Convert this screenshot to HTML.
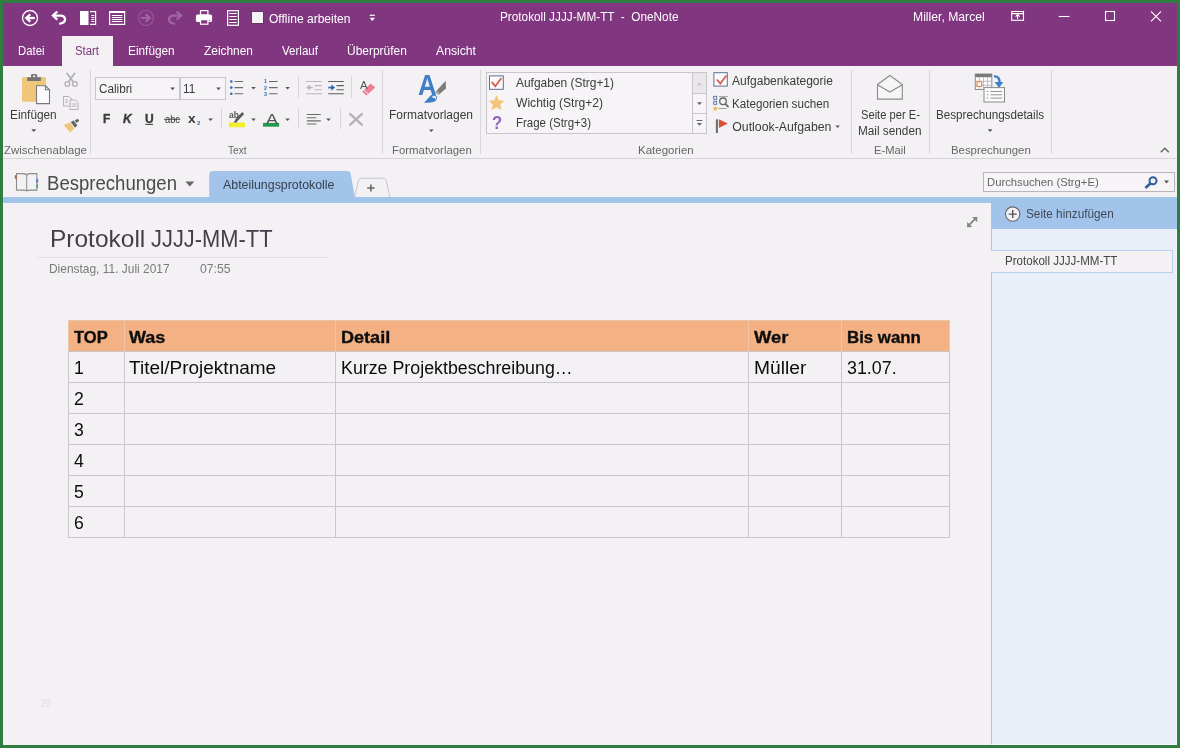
<!DOCTYPE html>
<html lang="de"><head><meta charset="utf-8"><title>Protokoll JJJJ-MM-TT - OneNote</title>
<style>
html,body{margin:0;padding:0}
body{width:1180px;height:748px;position:relative;overflow:hidden;background:#2f7d40;font-family:"Liberation Sans", sans-serif}
.r{position:absolute;box-sizing:border-box}
.t{position:absolute;white-space:pre;line-height:1;transform-origin:0 0;display:block}
svg.ov{position:absolute;left:0;top:0}
</style></head>
<body>
<div class="r" style="left:3px;top:3px;width:1174px;height:742px;background:#f3f1f4;"></div>
<div class="r" style="left:3px;top:3px;width:1174px;height:63px;background:#813680;"></div>
<div class="r" style="left:62px;top:36px;width:51px;height:30px;background:#f3f1f4;"></div>
<div class="r" style="left:3px;top:158px;width:1174px;height:1px;background:#d6d3d7;"></div>
<div class="r" style="left:90px;top:70px;width:1px;height:84px;background:#d9d6da;"></div>
<div class="r" style="left:382px;top:70px;width:1px;height:84px;background:#d9d6da;"></div>
<div class="r" style="left:480px;top:70px;width:1px;height:84px;background:#d9d6da;"></div>
<div class="r" style="left:851px;top:70px;width:1px;height:84px;background:#d9d6da;"></div>
<div class="r" style="left:929px;top:70px;width:1px;height:84px;background:#d9d6da;"></div>
<div class="r" style="left:1051px;top:70px;width:1px;height:84px;background:#d9d6da;"></div>
<div class="r" style="left:298px;top:76px;width:1px;height:22px;background:#d9d6da;"></div>
<div class="r" style="left:351px;top:76px;width:1px;height:22px;background:#d9d6da;"></div>
<div class="r" style="left:221px;top:108px;width:1px;height:21px;background:#d9d6da;"></div>
<div class="r" style="left:298px;top:108px;width:1px;height:21px;background:#d9d6da;"></div>
<div class="r" style="left:340px;top:108px;width:1px;height:21px;background:#d9d6da;"></div>
<div class="r" style="left:95px;top:77px;width:85px;height:22.5px;background:#f6f4f7;border:1px solid #c9c6cb;"></div>
<div class="r" style="left:180px;top:77px;width:45.5px;height:22.5px;background:#f6f4f7;border:1px solid #c9c6cb;"></div>
<div class="r" style="left:486px;top:72px;width:220.5px;height:61.5px;background:#f6f4f7;border:1px solid #c9c6cb;"></div>
<div class="r" style="left:692px;top:72px;width:14.5px;height:61.5px;border:1px solid #c9c6cb;"></div>
<div class="r" style="left:692px;top:93px;width:14.5px;height:1px;background:#c9c6cb;"></div>
<div class="r" style="left:692px;top:112.5px;width:14.5px;height:1px;background:#c9c6cb;"></div>
<div class="r" style="left:693px;top:73px;width:12.5px;height:20px;background:#e9e7ea;"></div>
<div class="r" style="left:983px;top:172px;width:192px;height:19.5px;background:#f6f4f7;border:1px solid #b9b6bb;"></div>
<div class="r" style="left:3px;top:197px;width:1174px;height:5.5px;background:#a2c3ea;"></div>
<div class="r" style="left:991px;top:197px;width:186px;height:32px;background:#a2c3ea;"></div>
<div class="r" style="left:991px;top:229px;width:186px;height:516px;background:#e8eff8;border-left:1px solid #a9c6e8;border-right:1px solid #f4f6fb;border-bottom:1px solid #f4f6fb;"></div>
<div class="r" style="left:991px;top:250px;width:182px;height:22.5px;background:#f3f1f4;border:1px solid #b7d0ee;border-left:none;"></div>
<div class="r" style="left:37px;top:256.5px;width:291px;height:1px;background:#e3e0e4;"></div>
<div class="r" style="left:68px;top:320px;width:882px;height:31.5px;background:#f4b183;"></div>
<div class="r" style="left:68px;top:320px;width:882px;height:1px;background:#e8c4a8;"></div>
<div class="r" style="left:68px;top:351px;width:882px;height:1px;background:#c9c7ca;"></div>
<div class="r" style="left:68px;top:382px;width:882px;height:1px;background:#c9c7ca;"></div>
<div class="r" style="left:68px;top:413px;width:882px;height:1px;background:#c9c7ca;"></div>
<div class="r" style="left:68px;top:444px;width:882px;height:1px;background:#c9c7ca;"></div>
<div class="r" style="left:68px;top:475px;width:882px;height:1px;background:#c9c7ca;"></div>
<div class="r" style="left:68px;top:506px;width:882px;height:1px;background:#c9c7ca;"></div>
<div class="r" style="left:68px;top:537px;width:882px;height:1px;background:#c9c7ca;"></div>
<div class="r" style="left:68px;top:351px;width:1px;height:187px;background:#c9c7ca;"></div>
<div class="r" style="left:68px;top:320px;width:1px;height:31px;background:#f0c7a6;"></div>
<div class="r" style="left:124px;top:351px;width:1px;height:187px;background:#c9c7ca;"></div>
<div class="r" style="left:124px;top:320px;width:1px;height:31px;background:#f0c7a6;"></div>
<div class="r" style="left:335px;top:351px;width:1px;height:187px;background:#c9c7ca;"></div>
<div class="r" style="left:335px;top:320px;width:1px;height:31px;background:#f0c7a6;"></div>
<div class="r" style="left:748px;top:351px;width:1px;height:187px;background:#c9c7ca;"></div>
<div class="r" style="left:748px;top:320px;width:1px;height:31px;background:#f0c7a6;"></div>
<div class="r" style="left:841px;top:351px;width:1px;height:187px;background:#c9c7ca;"></div>
<div class="r" style="left:841px;top:320px;width:1px;height:31px;background:#f0c7a6;"></div>
<div class="r" style="left:949px;top:351px;width:1px;height:187px;background:#c9c7ca;"></div>
<div class="r" style="left:949px;top:320px;width:1px;height:31px;background:#f0c7a6;"></div>
<svg class="ov" width="1180" height="748" viewBox="0 0 1180 748">
<!-- ===== title bar quick access ===== -->
<g fill="none" stroke="#fff" stroke-linejoin="round">
  <circle cx="30" cy="18" r="7.500" stroke-width="1.300"/>
  <path d="M26.500 18H34.800" stroke-width="2.300"/>
  <path d="M30.300 14.300L26.200 18l4.100 3.700" stroke-width="2.300" stroke-linejoin="miter"/>
  <path d="M54 15.600H60.300C66.300 15.600 67 22.600 60 23.600" stroke-width="2.300" stroke-linecap="round"/>
  <path d="M57.300 11.500L53 15.600l4.300 4.100" stroke-width="2.400" stroke-linejoin="miter"/>
</g>
<!-- dock -->
<rect x="80" y="11" width="8.500" height="14" fill="#fff"/>
<path d="M90 11.600h5.600v12.800h-5.600" fill="none" stroke="#fff" stroke-width="1.200"/>
<path d="M91.300 15.500h3M91.300 17.500h3M91.300 19.500h3M91.300 21.500h3" stroke="#fff" stroke-width="1"/>
<!-- page view -->
<rect x="109.600" y="11.600" width="15" height="12.800" fill="none" stroke="#fff" stroke-width="1.200"/>
<rect x="109" y="11" width="16.200" height="2" fill="#fff"/>
<path d="M111.800 15.500h10.600M111.800 17.500h10.600M111.800 19.500h10.600M111.800 21.500h10.600" stroke="#fff" stroke-width="1"/>
<!-- forward / redo dimmed -->
<g fill="none" stroke="#a066a0" stroke-linejoin="round">
  <circle cx="146" cy="18" r="7.500" stroke-width="1.200" stroke="#97579a"/>
  <path d="M141.200 18H149.500" stroke-width="2.200"/>
  <path d="M145.700 14.300L149.800 18l-4.100 3.700" stroke-width="2.200" stroke-linejoin="miter"/>
  <path d="M180 15.600H173.700C167.700 15.600 167 22.600 174 23.600" stroke-width="2.200" stroke-linecap="round"/>
  <path d="M176.700 11.500L181 15.600l-4.300 4.100" stroke-width="2.300" stroke-linejoin="miter"/>
</g>
<!-- printer -->
<rect x="200.500" y="10.600" width="7.400" height="4.400" fill="none" stroke="#fff" stroke-width="1.200"/>
<rect x="195.900" y="14.400" width="16.200" height="7.700" rx="1.600" fill="#fff"/>
<rect x="200.500" y="19.700" width="7.400" height="4.500" fill="#813680" stroke="#fff" stroke-width="1.200"/>
<rect x="209.200" y="20" width="1" height="1" fill="#813680"/>
<!-- page lines -->
<rect x="227.600" y="10.700" width="10.800" height="14.600" fill="none" stroke="#fff" stroke-width="1.200"/>
<path d="M229.300 13.500h7.400M229.300 16.500h7.400M229.300 19.500h7.400M229.300 22.500h7.400" stroke="#fff" stroke-width="1.200"/>
<!-- offline checkbox -->
<rect x="251.500" y="11.500" width="12" height="12" fill="#f5f3f6" stroke="#6f2f6d" stroke-width="1"/>
<!-- customize -->
<path d="M369.800 15.300h5" stroke="#fff" stroke-width="1.200"/>
<path d="M369.600 17.800h5.400l-2.700 3.300z" fill="#fff"/>
<!-- window controls -->
<g fill="none" stroke="#fff" stroke-width="1.100">
  <rect x="1011.700" y="11.500" width="11.800" height="8.800"/>
  <path d="M1011.700 13.600h11.800M1017.600 19v-4M1015.600 16.600l2-2 2 2"/>
  <path d="M1058.700 16.500h10.800"/>
  <rect x="1105.500" y="11.500" width="9" height="9"/>
  <path d="M1151 11.300l10 10M1161 11.300l-10 10"/>
</g>
<!-- ===== ribbon: paste ===== -->
<path d="M22 101.800v-23.300a1.500 1.500 0 0 1 1.500-1.500h21a1.500 1.500 0 0 1 1.500 1.500v23.300z" fill="#f0c67a"/>
<path d="M27.200 81v-3.700h3.800v-1.900a1.400 1.400 0 0 1 1.400-1.400h3.300a1.400 1.400 0 0 1 1.400 1.400v1.900h3.800v3.700z" fill="#757575"/>
<rect x="33" y="75.400" width="2.100" height="1.700" fill="#f3f1f4"/>
<path d="M36.500 85.800h9l4 4v13.800h-13z" fill="#fbfafc" stroke="#7a7a7a" stroke-width="1.100"/>
<path d="M45.500 85.800v4h4" fill="none" stroke="#7a7a7a" stroke-width="1.100"/>
<path d="M31.300 129.300h5l-2.500 2.800z" fill="#555"/>
<!-- scissors (disabled) -->
<g fill="none" stroke="#b2b0b3" stroke-width="1.700">
  <path d="M66.600 72.800l6.700 9.300M75 72.800l-6.700 9.300"/>
  <circle cx="67.300" cy="84" r="2.400" stroke-width="1.300"/><circle cx="75" cy="84" r="2.400" stroke-width="1.300"/>
</g>
<!-- copy (disabled) -->
<g fill="none" stroke="#b5b3b6" stroke-width="1">
  <path d="M63.500 96.500h5.500l2.500 2.500v7h-8z"/>
  <path d="M70 100h5.500l2.500 2.500v7h-8z" fill="#f3f1f4"/>
  <path d="M65 100h3M65 102.300h3M71.500 104h5M71.500 106.200h5"/>
</g>
<!-- format painter -->
<path d="M63.700 125.200l6.300-2.600 4.400 5.600-4.200 4.400z" fill="#f0c67a"/>
<path d="M70.700 122.100l2.900-1.600 3.800 4.900-2.400 2.400z" fill="#666"/>
<path d="M74.700 120.500l3-1.800 1.500 2.100-2.600 2.200z" fill="#666"/>
<!-- font dropdown arrows -->
<path d="M170.300 87.600h4.600l-2.300 2.600zM216.200 87.600h4.600l-2.300 2.600z" fill="#555"/>
<!-- underline for U, strike for abc -->
<path d="M145.300 124.400h7.900" stroke="#3b3b3b" stroke-width="1"/>
<path d="M164 119.300h16.300" stroke="#3b3b3b" stroke-width="0.900"/>
<path d="M208.200 118.400h4.800l-2.400 2.700z" fill="#555"/>
<!-- bullets -->
<g fill="#2b6cb0"><circle cx="231.300" cy="81.500" r="1.300"/><circle cx="231.300" cy="87.600" r="1.300"/><circle cx="231.300" cy="93.700" r="1.300"/></g>
<path d="M234.500 81.500h8.600M234.500 87.600h8.600M234.500 93.700h8.600" stroke="#6b6b6b" stroke-width="1.100"/>
<path d="M251.200 87h4.600l-2.300 2.600zM285.300 87h4.600l-2.300 2.600z" fill="#555"/>
<!-- numbering -->
<path d="M269 81.500h8.600M269 87.600h8.600M269 93.700h8.600" stroke="#6b6b6b" stroke-width="1.100"/>
<!-- outdent (disabled) -->
<path d="M306 81.500h15.800M314.500 85.600h7.300M314.500 89.700h7.300M306 93.800h15.800" stroke="#b9b7ba" stroke-width="1.100"/>
<path d="M307.500 87.600h5.200" stroke="#b9b7ba" stroke-width="1.600"/><path d="M310 84.600v6l-3.700-3z" fill="#b9b7ba"/>
<!-- indent -->
<path d="M328.200 81.500h15.600M336.500 85.600h7.300M336.500 89.700h7.300M328.200 93.800h15.600" stroke="#5f5f5f" stroke-width="1.100"/>
<path d="M328.300 87.600h4.500" stroke="#2b6cb0" stroke-width="1.700"/><path d="M331.300 84.500v6.200l3.800-3.100z" fill="#2b6cb0"/>
<!-- clear formatting eraser -->
<path d="M370.600 83.500l4.700 4-8.800 8-4.300-3.800z" fill="#ee7f96"/>
<path d="M363.800 90.100l4.400 3.900" stroke="#f3f1f4" stroke-width="0.900"/>
<!-- highlighter -->
<rect x="228.800" y="122.500" width="16.300" height="4.700" rx="1.200" fill="#f2ee2a"/>
<path d="M243.200 113l-7.600 8.200" stroke="#5a5a5a" stroke-width="2.700"/>
<path d="M236.400 119.800l-3.100 2.600 3.900.1z" fill="#5a5a5a"/>
<path d="M251.200 118.400h4.600l-2.300 2.600zM285.300 118.400h4.600l-2.300 2.600z" fill="#555"/>
<!-- font color bar -->
<rect x="263" y="122.900" width="16.100" height="3.800" fill="#1e9e4a"/>
<!-- align -->
<path d="M306.800 114.500h14M306.800 117.700h9.500M306.800 120.900h14M306.800 124h9.500" stroke="#6b6b6b" stroke-width="1.100"/>
<path d="M326.200 118.400h4.600l-2.300 2.600z" fill="#555"/>
<!-- delete X disabled -->
<path d="M349.500 113.300l13 12M362.500 113.300l-13 12" stroke="#b3b1b4" stroke-width="2.300"/>
<!-- Formatvorlagen brush -->
<path d="M445.700 80.700l.3 7.700-7.300 6.400-3.600-2.600z" fill="#7d7d7d"/>
<path d="M436.300 91.200l2.700 2.200" stroke="#f3f1f4" stroke-width="0.900"/>
<path d="M423.800 102.700c4.200-3.500 6-8 9.600-8.500 2.600-.3 3.900 2.200 3.500 4.300-.8 3.600-4.900 4.500-13.100 4.200z" fill="#3f7fc6"/>
<path d="M431.800 97.300c.8-1.200 2.200-1.800 3.300-1.200 1 .6 1.200 2 .5 3.300-.9-1.200-2.200-2-3.800-2.100z" fill="#f3f1f4"/>
<path d="M428.900 129.400h4.800l-2.400 2.600z" fill="#555"/>
<!-- gallery: checkbox, star -->
<rect x="489.500" y="75.900" width="13.800" height="13.400" fill="#fbfafc" stroke="#5f6f8f" stroke-width="1"/>
<path d="M491.700 81.900l3.500 4.300 6.300-8.200" fill="none" stroke="#d9604c" stroke-width="1.800"/>
<path d="M496.500 95.300l2.300 5 5.500.6-4.100 3.700 1.200 5.400-4.900-2.800-4.900 2.800 1.200-5.400-4.100-3.700 5.500-.6z" fill="#f3c474"/>
<!-- gallery scroll arrows -->
<path d="M697 85.200h5l-2.500-2.800z" fill="#c6c4c7"/>
<path d="M697 102.300h5l-2.500 2.800z" fill="#666"/>
<path d="M696.600 120.500h5.800" stroke="#666" stroke-width="1"/>
<path d="M697 123h5l-2.500 2.800z" fill="#666"/>
<!-- Aufgabenkategorie checkbox -->
<rect x="713.900" y="72.700" width="13.400" height="13.400" fill="#fbfafc" stroke="#5f6f8f" stroke-width="1"/>
<path d="M716.800 79.500l3.500 4 6.100-8" fill="none" stroke="#d9604c" stroke-width="1.800"/>
<!-- Kategorien suchen icon -->
<rect x="713.700" y="96.300" width="3" height="3" fill="none" stroke="#4d6fa0" stroke-width="0.900"/>
<rect x="713.700" y="101.300" width="3" height="3" fill="none" stroke="#4d6fa0" stroke-width="0.900"/>
<path d="M715.300 105.500l.9 1.900 2 .2-1.500 1.400.4 2-1.800-1-1.800 1 .4-2-1.500-1.400 2-.2z" fill="#f0b95a"/>
<circle cx="723" cy="101.300" r="3.300" fill="none" stroke="#666" stroke-width="1.300"/>
<path d="M725.400 103.800l3.100 3.300" stroke="#666" stroke-width="1.700"/>
<path d="M719 96.600h9M718.500 108.500h8" stroke="#999" stroke-width="0.900"/>
<!-- Outlook flag -->
<path d="M716.900 119.300v13.700" stroke="#6a6a6a" stroke-width="2"/>
<path d="M718.900 119.200l9 4.400-9 4.400z" fill="#d9533c"/>
<path d="M835.300 125.400h4.600l-2.300 2.600z" fill="#555"/>
<!-- envelope -->
<path d="M877.500 84.500l12.400-9 12.400 9v14.600h-24.800z" fill="#f7f5f8" stroke="#8a8a8a" stroke-width="1.100"/>
<path d="M877.500 84.800l12.400 7.200 12.400-7.200" fill="none" stroke="#8a8a8a" stroke-width="1.100"/>
<!-- meeting details icon -->
<rect x="975.300" y="74" width="16.500" height="15.500" fill="#fbfafc" stroke="#8a8a8a" stroke-width="1"/>
<rect x="975.300" y="74" width="16.500" height="3.200" fill="#7a7a7a"/>
<path d="M979.400 77.200v12.300M983.500 77.200v12.300M987.600 77.200v12.300M975.300 81.300h16.500M975.300 85.400h16.500" stroke="#b5b3b6" stroke-width="0.800"/>
<rect x="977" y="81.800" width="4.600" height="4.600" fill="#fff" stroke="#e08a3c" stroke-width="1.100"/>
<rect x="984" y="87.600" width="20.500" height="14.400" fill="#fbfafc" stroke="#8a8a8a" stroke-width="1"/>
<path d="M990.500 91.500h11.500M990.500 94.800h11.500M990.500 98.100h11.500" stroke="#8a8a8a" stroke-width="0.900"/>
<path d="M986.800 91.500h1.500M986.800 94.800h1.500M986.800 98.100h1.500" stroke="#8a8a8a" stroke-width="0.900"/>
<path d="M993.900 76.400c4.300-.4 5.900 2.300 5.600 6.500" fill="none" stroke="#3f7fc6" stroke-width="2.400"/>
<path d="M994.600 82h8.800l-4.400 5.800z" fill="#3f7fc6"/>
<path d="M987.700 129.300h4.800l-2.400 2.600z" fill="#555"/>
<!-- collapse ribbon caret -->
<path d="M1160.800 152.200l4-4 4 4" fill="none" stroke="#666" stroke-width="1.500"/>
<!-- ===== nav bar ===== -->
<path d="M16.500 190.100V173.600h6.800c1.900 0 3.400.9 3.400 2.100 0-1.200 1.500-2.100 3.400-2.100h6.800v16.500h-6.300c-1.900 0-3.400.3-3.900.9-.5-.6-2-.9-3.900-.9z" fill="none" stroke="#8b8b8b" stroke-width="1.100"/>
<path d="M26.700 175.700v15" stroke="#8b8b8b" stroke-width="1"/>
<rect x="14.800" y="175.200" width="1.900" height="3.500" fill="#c8553d"/>
<rect x="36.300" y="179" width="1.800" height="3.600" fill="#3f7fc6"/>
<rect x="36.300" y="184.300" width="1.800" height="3.500" fill="#4fa57c"/>
<path d="M185.300 181.600h9l-4.500 4.800z" fill="#666"/>
<!-- section tab -->
<path d="M209.200 197.500v-22.600a4 4 0 0 1 4-4h133.800a4 4 0 0 1 3.500 2l4.500 24.600z" fill="#a2c3ea"/>
<path d="M354.500 197c1.800-5.500 2.500-12 4-16.500.5-1.600 1.300-2.300 3-2.300h22c1.700 0 2.300.9 2.700 2.300l3.600 16.500" fill="#f3f1f4" stroke="#c9c7ca" stroke-width="1"/>
<path d="M367.200 188h7.400M370.900 184.400v7.200" stroke="#666" stroke-width="1.600"/>
<!-- search magnifier -->
<circle cx="1153" cy="180.700" r="3.500" fill="none" stroke="#2f5f9a" stroke-width="2"/>
<path d="M1150.300 183.600l-4.900 4.300" stroke="#2f5f9a" stroke-width="2.600"/>
<path d="M1164 180.500h5l-2.500 2.900z" fill="#555"/>
<!-- add page -->
<circle cx="1012.700" cy="214.100" r="7.200" fill="#f3f1f4" stroke="#666" stroke-width="1.100"/>
<path d="M1008.700 214.100h8M1012.700 210.100v8" stroke="#555" stroke-width="1.400"/>
<!-- expand arrow -->
<path d="M969.500 224.600l5.400-5.400" stroke="#858585" stroke-width="1.800"/>
<path d="M977.400 216.900l-.2 5.300-5.100-5.100zM967 227.200l.2-5.300 5.100 5.100z" fill="#858585"/>

</svg>
<div id="txt" style="position:absolute;left:0;top:0;width:1180px;height:748px;will-change:transform">
<span class="t" style="left:269.0px;top:12.9px;font-size:12.5px;color:#ffffff;transform:scaleX(0.9640);">Offline arbeiten</span>
<span class="t" style="left:500.0px;top:10.9px;font-size:12.5px;color:#ffffff;transform:scaleX(0.9425);">Protokoll JJJJ-MM-TT  -  OneNote</span>
<span class="t" style="left:913.3px;top:10.9px;font-size:12.5px;color:#ffffff;transform:scaleX(0.9739);">Miller, Marcel</span>
<span class="t" style="left:17.5px;top:45.1px;font-size:12.5px;color:#ffffff;transform:scaleX(0.9079);">Datei</span>
<span class="t" style="left:75.0px;top:45.1px;font-size:12.5px;color:#7a3378;transform:scaleX(0.9089);">Start</span>
<span class="t" style="left:128.3px;top:45.1px;font-size:12.5px;color:#ffffff;transform:scaleX(0.9461);">Einfügen</span>
<span class="t" style="left:203.8px;top:45.1px;font-size:12.5px;color:#ffffff;transform:scaleX(0.9526);">Zeichnen</span>
<span class="t" style="left:282.0px;top:45.1px;font-size:12.5px;color:#ffffff;transform:scaleX(0.9249);">Verlauf</span>
<span class="t" style="left:347.2px;top:45.1px;font-size:12.5px;color:#ffffff;transform:scaleX(0.9561);">Überprüfen</span>
<span class="t" style="left:436.0px;top:45.1px;font-size:12.5px;color:#ffffff;transform:scaleX(0.9756);">Ansicht</span>
<span class="t" style="left:10.3px;top:109.3px;font-size:12.3px;color:#3b3b3b;transform:scaleX(0.9620);">Einfügen</span>
<span class="t" style="left:4.0px;top:144.9px;font-size:11.8px;color:#666666;transform:scaleX(0.9734);">Zwischenablage</span>
<span class="t" style="left:98.6px;top:83.1px;font-size:12.3px;color:#3b3b3b;transform:scaleX(0.9524);">Calibri</span>
<span class="t" style="left:183.0px;top:83.1px;font-size:12.3px;color:#3b3b3b;transform:scaleX(0.9557);">11</span>
<span class="t" style="left:102.6px;top:113.1px;font-size:12px;color:#3b3b3b;transform:scaleX(0.9940);font-weight:bold;-webkit-text-stroke:0.35px #3b3b3b;">F</span>
<span class="t" style="left:122.6px;top:113.1px;font-size:12px;color:#3b3b3b;transform:scaleX(1.0032);font-weight:bold;font-style:italic;-webkit-text-stroke:0.35px #3b3b3b;">K</span>
<span class="t" style="left:144.9px;top:113.1px;font-size:12px;color:#3b3b3b;transform:scaleX(1.0032);font-weight:bold;-webkit-text-stroke:0.35px #3b3b3b;">U</span>
<span class="t" style="left:164.5px;top:114.4px;font-size:10.5px;color:#3b3b3b;transform:scaleX(0.8856);">abc</span>
<span class="t" style="left:188.0px;top:112.9px;font-size:12.3px;color:#3b3b3b;transform:scaleX(1.1105);font-weight:bold;">x</span>
<span class="t" style="left:196.6px;top:120.6px;font-size:5.6px;color:#2b6cb0;transform:scaleX(1.0880);font-weight:bold;">2</span>
<span class="t" style="left:227.5px;top:144.9px;font-size:11.8px;color:#666666;transform:scaleX(0.8549);">Text</span>
<span class="t" style="left:389.0px;top:109.3px;font-size:12.3px;color:#3b3b3b;transform:scaleX(0.9753);">Formatvorlagen</span>
<span class="t" style="left:391.7px;top:144.9px;font-size:11.8px;color:#666666;transform:scaleX(0.9658);">Formatvorlagen</span>
<span class="t" style="left:516.0px;top:77.1px;font-size:12.3px;color:#3b3b3b;transform:scaleX(0.9718);">Aufgaben (Strg+1)</span>
<span class="t" style="left:516.0px;top:97.0px;font-size:12.3px;color:#3b3b3b;transform:scaleX(0.9831);">Wichtig (Strg+2)</span>
<span class="t" style="left:516.0px;top:116.9px;font-size:12.3px;color:#3b3b3b;transform:scaleX(0.9339);">Frage (Strg+3)</span>
<span class="t" style="left:492.0px;top:114.3px;font-size:18.5px;color:#9263c2;transform:scaleX(0.9017);font-weight:bold;">?</span>
<span class="t" style="left:638.3px;top:144.9px;font-size:11.8px;color:#666666;transform:scaleX(0.9761);">Kategorien</span>
<span class="t" style="left:732.3px;top:74.8px;font-size:12.3px;color:#3b3b3b;transform:scaleX(0.9772);">Aufgabenkategorie</span>
<span class="t" style="left:732.3px;top:98.2px;font-size:12.3px;color:#3b3b3b;transform:scaleX(0.9477);">Kategorien suchen</span>
<span class="t" style="left:732.3px;top:121.3px;font-size:12.3px;color:#3b3b3b;">Outlook-Aufgaben</span>
<span class="t" style="left:860.7px;top:109.3px;font-size:12.3px;color:#3b3b3b;transform:scaleX(0.9070);">Seite per E-</span>
<span class="t" style="left:858.4px;top:125.3px;font-size:12.3px;color:#3b3b3b;transform:scaleX(0.9576);">Mail senden</span>
<span class="t" style="left:874.3px;top:144.9px;font-size:11.8px;color:#666666;transform:scaleX(0.9480);">E-Mail</span>
<span class="t" style="left:936.2px;top:109.3px;font-size:12.3px;color:#3b3b3b;transform:scaleX(0.9468);">Besprechungsdetails</span>
<span class="t" style="left:950.7px;top:144.9px;font-size:11.8px;color:#666666;transform:scaleX(0.9654);">Besprechungen</span>
<span class="t" style="left:46.5px;top:173.9px;font-size:19.5px;color:#4a4a4a;transform:scaleX(0.9516);">Besprechungen</span>
<span class="t" style="left:222.7px;top:178.8px;font-size:12px;color:#36404f;transform:scaleX(1.0317);">Abteilungsprotokolle</span>
<span class="t" style="left:987.3px;top:176.7px;font-size:11.8px;color:#666;transform:scaleX(0.9543);">Durchsuchen (Strg+E)</span>
<span class="t" style="left:1026.0px;top:207.8px;font-size:12px;color:#3f4958;transform:scaleX(0.9809);">Seite hinzufügen</span>
<span class="t" style="left:1005.1px;top:254.9px;font-size:12px;color:#444;transform:scaleX(0.9634);">Protokoll JJJJ-MM-TT</span>
<span class="t" style="left:49.5px;top:226.8px;font-size:24px;color:#433f4a;transform:scaleX(1.0205);">Protokoll </span>
<span class="t" style="left:151.2px;top:226.8px;font-size:24px;color:#433f4a;transform:scaleX(0.9115);">JJJJ-MM-TT</span>
<span class="t" style="left:49.4px;top:262.6px;font-size:12.2px;color:#7a7a7a;transform:scaleX(0.9797);">Dienstag, 11. Juli 2017</span>
<span class="t" style="left:200.4px;top:262.6px;font-size:12.2px;color:#7a7a7a;transform:scaleX(1.0033);">07:55</span>
<span class="t" style="left:40.5px;top:698.0px;font-size:11px;color:#dcdadd;transform:scaleX(0.7918);">20</span>
<span class="t" style="left:73.5px;top:329.1px;font-size:17.2px;color:#0c0c0c;transform:scaleX(0.9649);font-weight:bold;-webkit-text-stroke:0.4px #1c1c1c;">TOP</span>
<span class="t" style="left:129.4px;top:329.1px;font-size:17.2px;color:#0c0c0c;transform:scaleX(1.0489);font-weight:bold;-webkit-text-stroke:0.4px #1c1c1c;">Was</span>
<span class="t" style="left:340.5px;top:329.1px;font-size:17.2px;color:#0c0c0c;transform:scaleX(1.0510);font-weight:bold;-webkit-text-stroke:0.4px #1c1c1c;">Detail</span>
<span class="t" style="left:754.0px;top:329.1px;font-size:17.2px;color:#0c0c0c;transform:scaleX(1.0693);font-weight:bold;-webkit-text-stroke:0.4px #1c1c1c;">Wer</span>
<span class="t" style="left:847.2px;top:329.1px;font-size:17.2px;color:#0c0c0c;transform:scaleX(0.9794);font-weight:bold;-webkit-text-stroke:0.4px #1c1c1c;">Bis wann</span>
<span class="t" style="left:73.6px;top:360.4px;font-size:17.5px;color:#0c0c0c;transform:scaleX(1.0067);">1</span>
<span class="t" style="left:129.4px;top:360.4px;font-size:17.5px;color:#0c0c0c;transform:scaleX(1.0862);">Titel/Projektname</span>
<span class="t" style="left:340.5px;top:360.4px;font-size:17.5px;color:#0c0c0c;transform:scaleX(1.0175);">Kurze Projektbeschreibung…</span>
<span class="t" style="left:754.0px;top:360.4px;font-size:17.5px;color:#0c0c0c;transform:scaleX(1.0974);">Müller</span>
<span class="t" style="left:847.2px;top:360.4px;font-size:17.5px;color:#0c0c0c;transform:scaleX(1.0194);">31.07.</span>
<span class="t" style="left:73.6px;top:391.4px;font-size:17.5px;color:#0c0c0c;transform:scaleX(1.0067);">2</span>
<span class="t" style="left:73.6px;top:422.4px;font-size:17.5px;color:#0c0c0c;transform:scaleX(1.0067);">3</span>
<span class="t" style="left:73.6px;top:453.4px;font-size:17.5px;color:#0c0c0c;transform:scaleX(1.0067);">4</span>
<span class="t" style="left:73.6px;top:484.4px;font-size:17.5px;color:#0c0c0c;transform:scaleX(1.0067);">5</span>
<span class="t" style="left:73.6px;top:515.4px;font-size:17.5px;color:#0c0c0c;transform:scaleX(1.0067);">6</span>
<span class="t" style="left:418.4px;top:69.5px;font-size:30px;color:#3f7fc6;transform:scaleX(0.8583);font-weight:bold;">A</span>
<span class="t" style="left:266.2px;top:111.9px;font-size:14.3px;color:#555;transform:scaleX(1.2465);">A</span>
<span class="t" style="left:228.8px;top:110.0px;font-size:9.6px;color:#555;transform:scaleX(0.8748);font-weight:bold;">ab</span>
<span class="t" style="left:360.2px;top:80.0px;font-size:11px;color:#555;transform:scaleX(1.0349);">A</span>
<span class="t" style="left:264.0px;top:79.4px;font-size:5.8px;color:#2b6cb0;transform:scaleX(0.9275);font-weight:bold;">1</span>
<span class="t" style="left:264.0px;top:85.5px;font-size:5.8px;color:#2b6cb0;transform:scaleX(0.9275);font-weight:bold;">2</span>
<span class="t" style="left:264.0px;top:91.6px;font-size:5.8px;color:#2b6cb0;transform:scaleX(0.9275);font-weight:bold;">3</span>
</div>
</body></html>
